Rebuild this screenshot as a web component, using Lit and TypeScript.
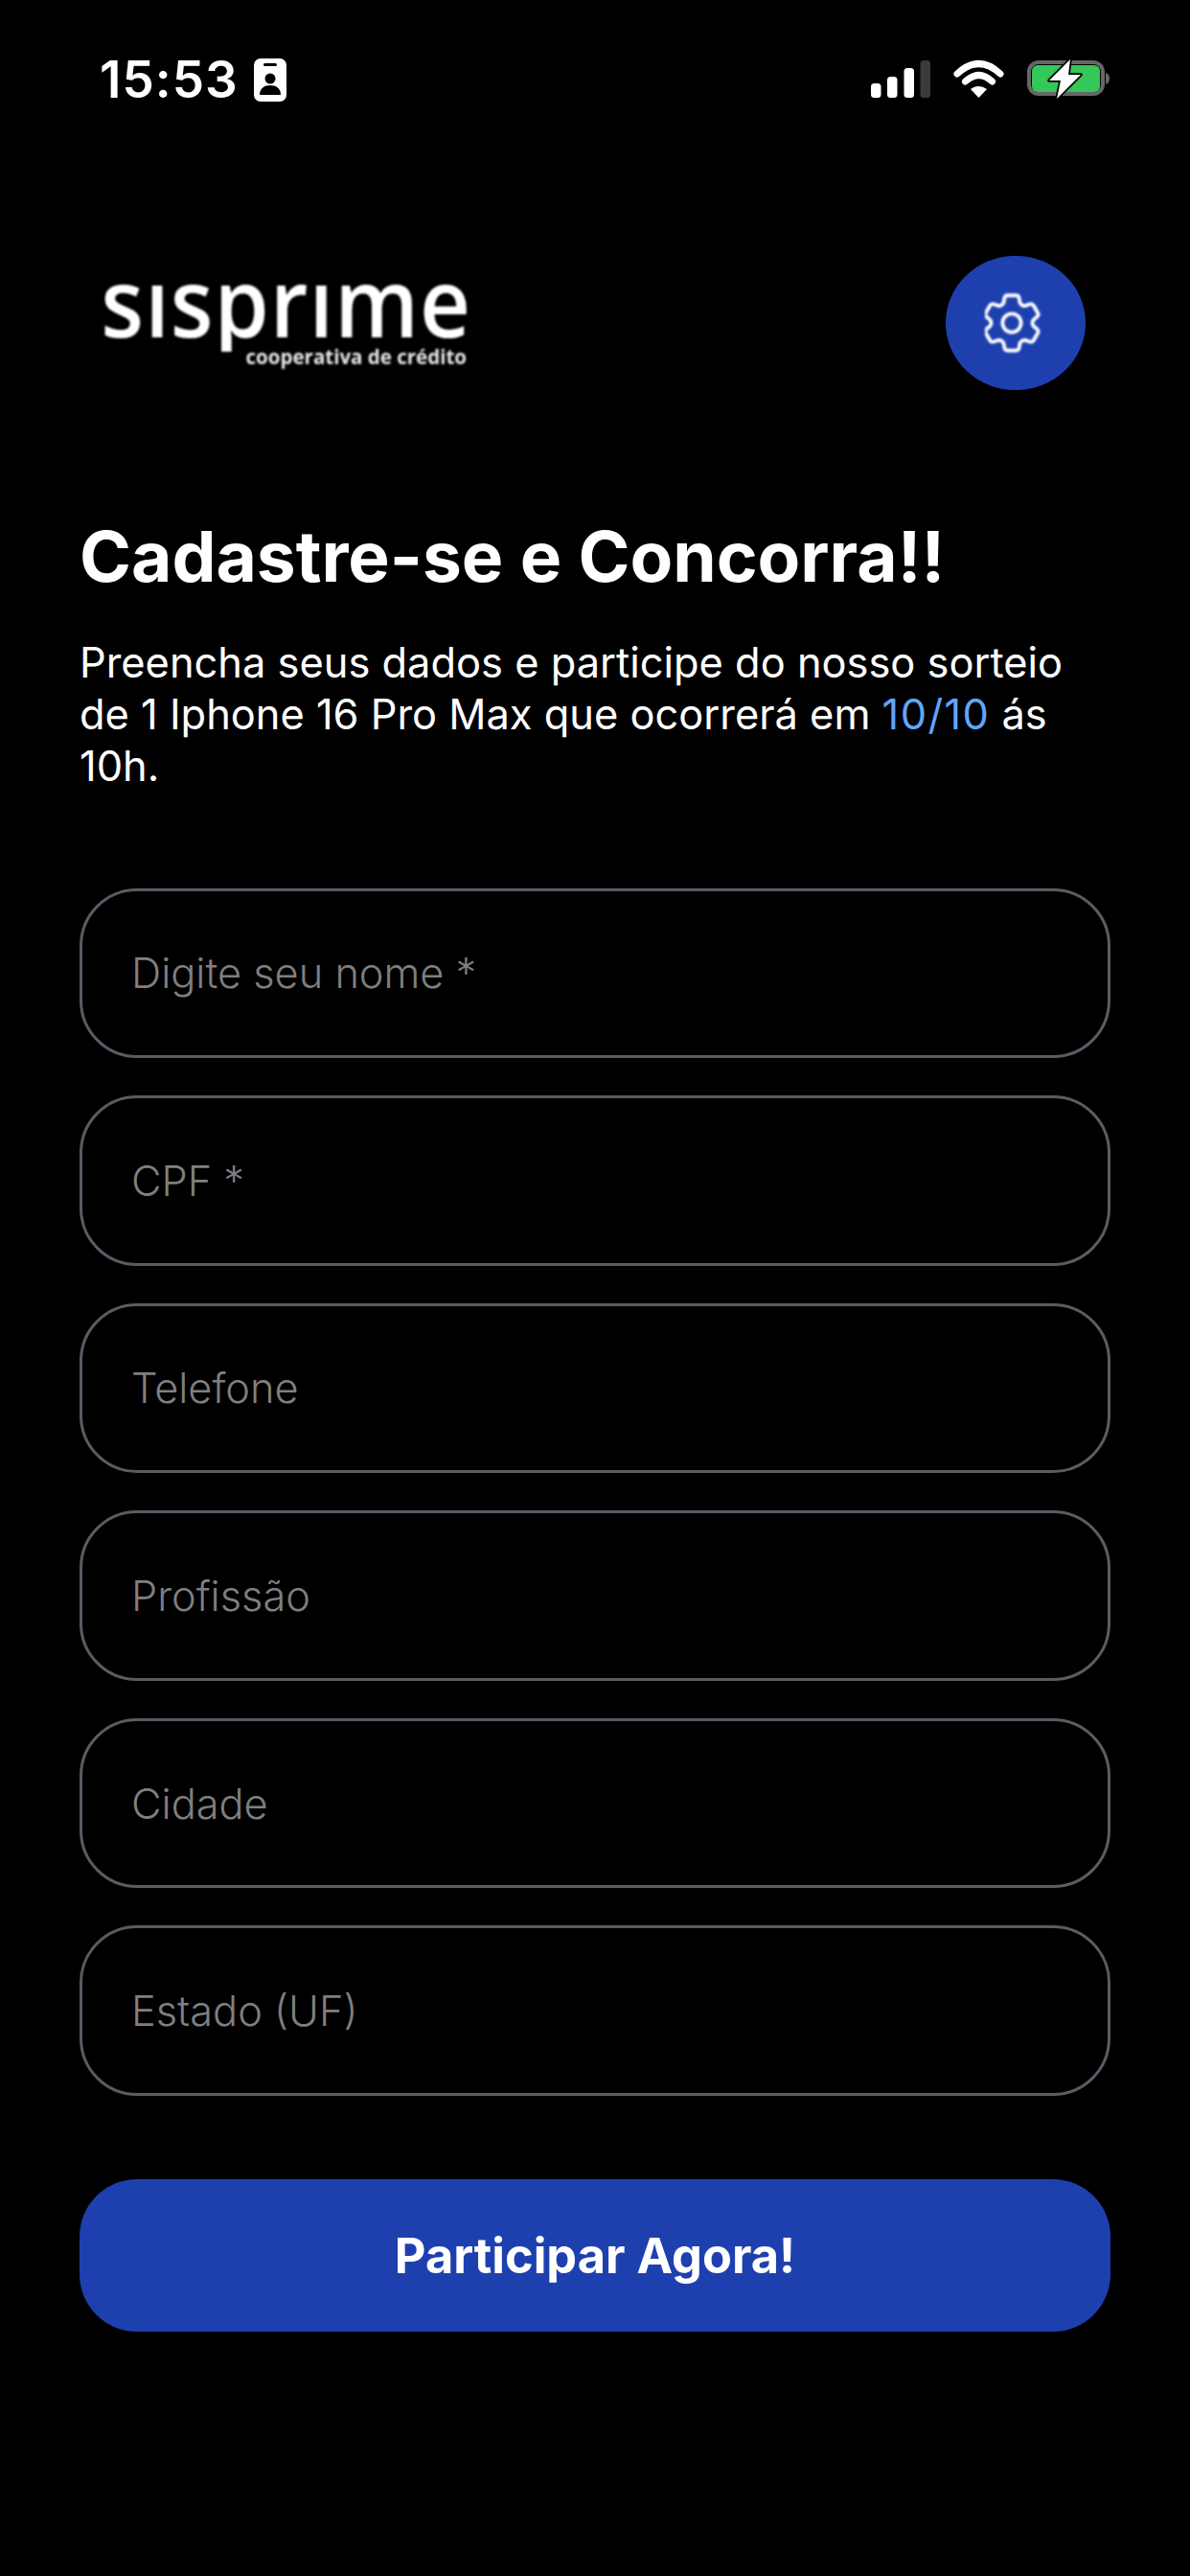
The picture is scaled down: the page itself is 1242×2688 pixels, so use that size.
import { LitElement, html, css } from "lit";
import { customElement } from "lit/decorators.js";

const fields = ["Digite seu nome *", "CPF *", "Telefone", "Profissão", "Cidade", "Estado (UF)"];

@customElement("app-root")
export class AppRoot extends LitElement {
  static styles = css`
    :host { display: block; width: 1242px; height: 2688px; background: #000; color: #fff; font-family: Inter, "Noto Sans", sans-serif; overflow: hidden; }
    .status { display: flex; justify-content: space-between; align-items: center; height: 60px; margin-top: 53px; padding: 0 84px 0 104px; }
    .left { display: flex; align-items: center; gap: 16px; }
    .time { font-size: 53px; font-weight: 600; line-height: 60px; letter-spacing: 1px; }
    .right { display: flex; align-items: center; gap: 24px; }
    .header { display: flex; justify-content: space-between; align-items: flex-start; margin-top: 154px; padding: 0 109px 0 106px; height: 140px; }
    .logo { display: flex; flex-direction: column; align-items: flex-end; width: 381px; margin-top: 1px; filter: blur(1.1px); }
    .logo-main { font-family: "Open Sans", sans-serif; font-weight: 600; font-size: 92px; line-height: 98px; height: 98px; letter-spacing: 1px; margin-right: -5px; clip-path: inset(0 -6px 0 -6px); transform: scaleY(1.08); transform-origin: 0 84.7px; }
    .logo-sub { font-family: "Open Sans", sans-serif; font-weight: 700; font-size: 20.5px; line-height: 18px; color: #e8e8ee; margin-top: -3px; white-space: nowrap; }
    .gear { width: 146px; height: 140px; border-radius: 50%; background: #1e40af; display: flex; align-items: center; justify-content: center; }
    .gear svg { filter: blur(1px); margin-right: 5px; }
    .content { padding: 0 83px; }
    h1 { margin: 131px 0 0; font-size: 73px; line-height: 86px; font-weight: 700; white-space: nowrap; }
    p { margin: 40px 0 0; font-size: 43.4px; line-height: 54px; font-weight: 400; white-space: nowrap; }
    .link { color: #60a5fa; letter-spacing: 1.4px; }
    .fields { display: flex; flex-direction: column; gap: 39.1px; margin-top: 100.5px; }
    .field { height: 177.5px; box-sizing: border-box; border: 3px solid #5b5b66; border-radius: 60px; padding: 0 51px; display: flex; align-items: center; font-size: 43.3px; font-weight: 300; color: #7f7f7f; }
    .cta { margin-top: 87px; height: 159px; border-radius: 60px; background: #1e40af; display: flex; align-items: center; justify-content: center; font-size: 50.5px; font-weight: 700; }
  `;

  render() {
    return html`
      <div class="status">
        <div class="left">
          <span class="time">15:53</span>
          <svg width="34" height="45" viewBox="0 0 34 45">
            <rect width="34" height="45" rx="7" fill="#fff" />
            <rect x="10" y="5" width="14" height="3" rx="1.5" fill="#000" />
            <circle cx="17" cy="21" r="5.500" fill="#000" />
            <path d="M6 38c0-7 5-10 11-10s11 3 11 10z" fill="#000" />
          </svg>
        </div>
        <div class="right">
          <svg width="62" height="42" viewBox="0 0 62 42">
            <rect x="0" y="25" width="10.500" height="15" rx="3.500" fill="#fff" />
            <rect x="17" y="18" width="10.500" height="22" rx="3.500" fill="#fff" />
            <rect x="34.500" y="9" width="10.500" height="31" rx="3.500" fill="#fff" />
            <rect x="51.500" y="1" width="10.500" height="39" rx="3.500" fill="#3a3a3a" />
          </svg>
          <svg width="53" height="42" viewBox="0 0 53 42">
            <path d="M4 15Q26.500-6 49 15" fill="none" stroke="#fff" stroke-width="7" stroke-linecap="round" />
            <path d="M12.500 23Q26.500 10 40.500 23" fill="none" stroke="#fff" stroke-width="7" stroke-linecap="round" />
            <path d="M18 31Q26.500 25 35 31L26.500 40Z" fill="#fff" />
          </svg>
          <svg width="86" height="44" viewBox="0 0 86 44">
            <rect x="2" y="4" width="77" height="33" rx="10" fill="none" stroke="#666" stroke-width="4" />
            <rect x="5" y="7" width="71" height="28" rx="6" fill="#34c759" />
            <path d="M82 15c2.500.5 4 3 4 6s-1.500 5.500-4 6z" fill="#666" />
            <path d="M45 1 23 23H35L31 42 56 17H43Z" fill="#fff" stroke="#000" stroke-width="3.500" stroke-linejoin="round" paint-order="stroke" />
          </svg>
        </div>
      </div>
      <div class="header">
        <div class="logo">
          <div class="logo-main">sısprıme</div>
          <div class="logo-sub">cooperativa de crédito</div>
        </div>
        <div class="gear">
          <svg width="59.200" height="64" viewBox="3.250 2 18.500 20" fill="none" stroke="#fff" stroke-width="1.200" stroke-linecap="round" stroke-linejoin="round">
            <path d="M9.594 3.94c.09-.542.56-.94 1.11-.94h2.593c.55 0 1.02.398 1.11.94l.213 1.281c.063.374.313.686.645.87.074.04.147.083.22.127.325.196.72.257 1.075.124l1.217-.456a1.125 1.125 0 0 1 1.37.49l1.296 2.247a1.125 1.125 0 0 1-.26 1.431l-1.003.827c-.293.241-.438.613-.43.992a7.723 7.723 0 0 1 0 .255c-.008.378.137.75.43.991l1.004.827c.424.35.534.955.26 1.43l-1.298 2.247a1.125 1.125 0 0 1-1.369.491l-1.217-.456c-.355-.133-.75-.072-1.076.124a6.47 6.47 0 0 1-.22.128c-.331.183-.581.495-.644.869l-.213 1.281c-.09.543-.56.94-1.11.94h-2.594c-.55 0-1.019-.398-1.11-.94l-.213-1.281c-.062-.374-.312-.686-.644-.87a6.52 6.52 0 0 1-.22-.127c-.325-.196-.72-.257-1.076-.124l-1.217.456a1.125 1.125 0 0 1-1.369-.49l-1.297-2.247a1.125 1.125 0 0 1 .26-1.431l1.004-.827c.292-.24.437-.613.43-.991a6.932 6.932 0 0 1 0-.255c.007-.38-.138-.751-.43-.992l-1.004-.827a1.125 1.125 0 0 1-.26-1.43l1.297-2.247a1.125 1.125 0 0 1 1.37-.491l1.216.456c.356.133.751.072 1.076-.124.072-.044.146-.086.22-.128.332-.183.582-.495.644-.869l.214-1.28Z" />
            <circle cx="12" cy="12" r="3" />
          </svg>
        </div>
      </div>
      <div class="content">
        <h1>Cadastre-se e Concorra!!</h1>
        <p>Preencha seus dados e participe do nosso sorteio<br />de 1 Iphone 16 Pro Max que ocorrerá em <span class="link">10/10</span> ás<br />10h.</p>
        <div class="fields">
          ${fields.map((f) => html`<div class="field">${f}</div>`)}
        </div>
        <div class="cta">Participar Agora!</div>
      </div>
    `;
  }
}
